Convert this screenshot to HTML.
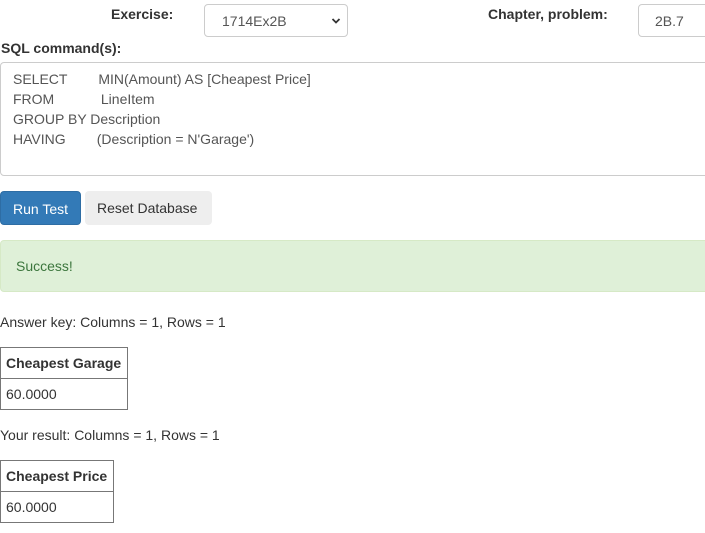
<!DOCTYPE html>
<html><head><meta charset="utf-8"><style>
*{box-sizing:border-box;margin:0;padding:0}
body{width:705px;height:533px;overflow:hidden;background:#fff;font-family:"Liberation Sans",Arial,sans-serif;font-size:14px;color:#333;position:relative}
.a{position:absolute;white-space:nowrap}
.lbl{font-weight:bold;font-size:14px}
.sel{border:1px solid #ccc;border-radius:4px;background:#fff;height:33px;font-size:14px;color:#555;padding:8px 0 0 17px}
.ta{left:0;top:62px;width:720px;height:114px;border:1px solid #ccc;border-radius:4px;padding:6px 12px;line-height:20px;color:#555;white-space:pre}
.btn{top:191px;height:34px;border-radius:4px;padding:9px 12px 0;font-size:14px}
.alert{left:0;top:240px;width:720px;height:52px;background:#dff0d8;border:1px solid #d6e9c6;border-radius:4px;color:#3c763d;padding:17px 15px}
table{position:absolute;border-collapse:collapse;left:0}
td,th{border:1px solid #777;padding:0 5px;height:31px;text-align:left;font-size:14px}
th{font-weight:bold}
</style></head><body>
<div class="a lbl" style="left:111px;top:6px">Exercise:</div>
<div class="a sel" style="left:204px;top:4px;width:144px">1714Ex2B
<svg style="position:absolute;right:6px;top:12px" width="10" height="8" viewBox="0 0 10 8"><path d="M1.5 2 L5 5.5 L8.5 2" stroke="#333" stroke-width="1.8" fill="none"/></svg></div>
<div class="a lbl" style="left:488px;top:6px">Chapter, problem:</div>
<div class="a sel" style="left:638px;top:4px;width:80px;color:#555;padding-left:16px">2B.7</div>
<div class="a lbl" style="left:1px;top:40px">SQL command(s):</div>
<div class="a ta">SELECT        MIN(Amount) AS [Cheapest Price]
FROM            LineItem
GROUP BY Description
HAVING        (Description = N'Garage')</div>
<div class="a btn" style="left:0;width:81px;background:#337ab7;border:1px solid #2e6da4;color:#fff">Run Test</div>
<div class="a btn" style="left:85px;width:127px;background:#eee;color:#333">Reset Database</div>
<div class="a alert">Success!</div>
<div class="a" style="left:0;top:314px">Answer key: Columns = 1, Rows = 1</div>
<table style="top:347px;width:128px"><tr><th>Cheapest Garage</th></tr><tr><td>60.0000</td></tr></table>
<div class="a" style="left:0;top:427px">Your result: Columns = 1, Rows = 1</div>
<table style="top:460px;width:114px"><tr><th>Cheapest Price</th></tr><tr><td>60.0000</td></tr></table>
</body></html>
